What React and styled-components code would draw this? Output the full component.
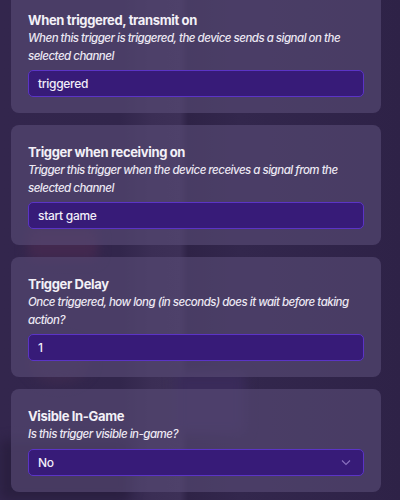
import styled, { createGlobalStyle } from "styled-components";

const GlobalStyle = createGlobalStyle`
  html, body {
    margin: 0;
    padding: 0;
    background: #2f2348;
  }
  * { box-sizing: border-box; }
`;

const Screen = styled.div`
  position: relative;
  width: 400px;
  height: 500px;
  overflow: hidden;
  background: linear-gradient(90deg, #33264d 0%, #32264c 30%, #3b2e55 38%, #3d3057 45%, #2f2347 47%, #33274d 60%, #2e2247 100%);
  font-family: Inter, "Noto Sans", sans-serif;
`;

const Blob = styled.div`
  position: absolute;
  filter: blur(6px);
  border-radius: ${(p) => p.$round || "6px"};
`;

const List = styled.div`
  position: relative;
  display: flex;
  flex-direction: column;
  gap: 12px;
  margin-top: -7px;
  padding-left: 11px;
`;

const Card = styled.section`
  width: 370px;
  padding: 17px 17px 16px;
  border-radius: 8px;
  background: rgba(88, 76, 118, 0.62);
  display: flex;
  flex-direction: column;
`;

const Title = styled.div`
  font-size: 13px;
  line-height: 20px;
  font-weight: 700;
  color: #f3f0f7;
  letter-spacing: -0.35px;
`;

const Desc = styled.div`
  font-size: 11.5px;
  line-height: 17.5px;
  font-style: italic;
  font-weight: 500;
  color: #ece8f3;
  letter-spacing: -0.5px;
`;

const Field = styled.div`
  margin-top: 5px;
  height: 27px;
  border: 1px solid #5b34c6;
  border-radius: 5px;
  background: #371b78;
  color: #f2eef8;
  font-size: 12px;
  font-weight: 500;
  letter-spacing: -0.3px;
  padding: 0 9px;
  display: flex;
  align-items: center;
  justify-content: space-between;
`;

const Chevron = () => (
  <svg width="10" height="7" viewBox="0 0 10 7" style={{ marginRight: 3 }}>
    <path d="M1 1.5 L5 5.5 L9 1.5" fill="none" stroke="#8a72bf" strokeWidth="1.1" />
  </svg>
);

const items = [
  {
    title: "When triggered, transmit on",
    desc: "When this trigger is triggered, the device sends a signal on the selected channel",
    value: "triggered",
  },
  {
    title: "Trigger when receiving on",
    desc: "Trigger this trigger when the device receives a signal from the selected channel",
    value: "start game",
  },
  {
    title: "Trigger Delay",
    desc: "Once triggered, how long (in seconds) does it wait before taking action?",
    value: "1",
  },
  {
    title: "Visible In-Game",
    desc: "Is this trigger visible in-game?",
    value: "No",
    select: true,
  },
];

export default function App() {
  return (
    <Screen>
      <GlobalStyle />
      <Blob style={{ left: 28, top: 228, width: 70, height: 32, background: "#43294f" }} />
      <Blob $round="50%" style={{ left: 28, top: 340, width: 62, height: 44, background: "#3c2a4f" }} />
      <Blob style={{ left: 175, top: 372, width: 70, height: 62, background: "#3a2b5a" }} />
      <Blob style={{ left: 0, top: 440, width: 130, height: 60, background: "#2a1f40" }} />
      <List>
        {items.map((it) => (
          <Card key={it.title}>
            <Title>{it.title}</Title>
            <Desc>{it.desc}</Desc>
            <Field>
              <span>{it.value}</span>
              {it.select && <Chevron />}
            </Field>
          </Card>
        ))}
      </List>
    </Screen>
  );
}
